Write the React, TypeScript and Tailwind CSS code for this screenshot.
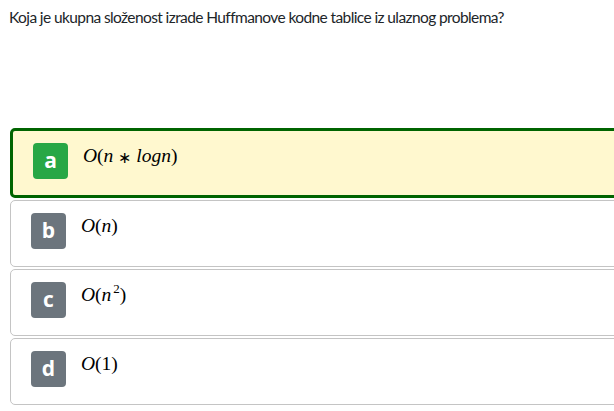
import React from 'react'

type Option = {
  key: string
  selected?: boolean
  math: React.ReactNode
}

const mi = 'italic'

const options: Option[] = [
  {
    key: 'a',
    selected: true,
    math: (
      <>
        <span className={mi}>O</span>(<span className={mi}>n</span>
        <span className="mx-[5px] text-[16px] relative top-[1px]">∗</span>
        <span className={mi}>logn</span>)
      </>
    ),
  },
  {
    key: 'b',
    math: (
      <>
        <span className={mi}>O</span>(<span className={mi}>n</span>)
      </>
    ),
  },
  {
    key: 'c',
    math: (
      <>
        <span className={mi}>O</span>(<span className={mi}>n</span>
        <span className="inline-block text-[13px] leading-none relative -top-[8px] ml-[2px]">2</span>)
      </>
    ),
  },
  {
    key: 'd',
    math: (
      <>
        <span className={mi}>O</span>(1)
      </>
    ),
  },
]

export default function App() {
  return (
    <main className="w-[614px] h-[411px] overflow-hidden bg-white">
      <p className="pl-[9px] pt-[5px] text-[15.5px] tracking-[-0.6px] leading-[24px] text-[#212529] font-['Lato',sans-serif]">
        Koja je ukupna složenost izrade Huffmanove kodne tablice iz ulaznog problema?
      </p>
      <div className="mt-[99px] ml-[10px] flex flex-col gap-[2px] w-[640px]">
        {options.map((o) => (
          <div
            key={o.key}
            className={
              o.selected
                ? 'h-[70px] rounded-[5px] border-[3px] border-[#006400] bg-[#fff8cf] pt-[12px] pl-[20px] flex items-start'
                : 'h-[67px] rounded-[5px] border border-[#c4c4c4] bg-white pt-[12px] pl-[20px] flex items-start'
            }
          >
            <span
              className={
                o.selected
                  ? 'w-[35px] h-[36px] rounded-[4px] bg-[#28a745] text-white font-bold text-[21px] flex items-center justify-center font-["Open_Sans",sans-serif]'
                  : 'w-[35px] h-[36px] rounded-[4px] bg-[#6c757d] text-white font-bold text-[21px] flex items-center justify-center font-["Open_Sans",sans-serif]'
              }
            >
              {o.key}
            </span>
            <span className="ml-[15px] mt-[1px] text-[19.5px] leading-[24px] text-black font-['Liberation_Serif',serif]">
              {o.math}
            </span>
          </div>
        ))}
      </div>
    </main>
  )
}
